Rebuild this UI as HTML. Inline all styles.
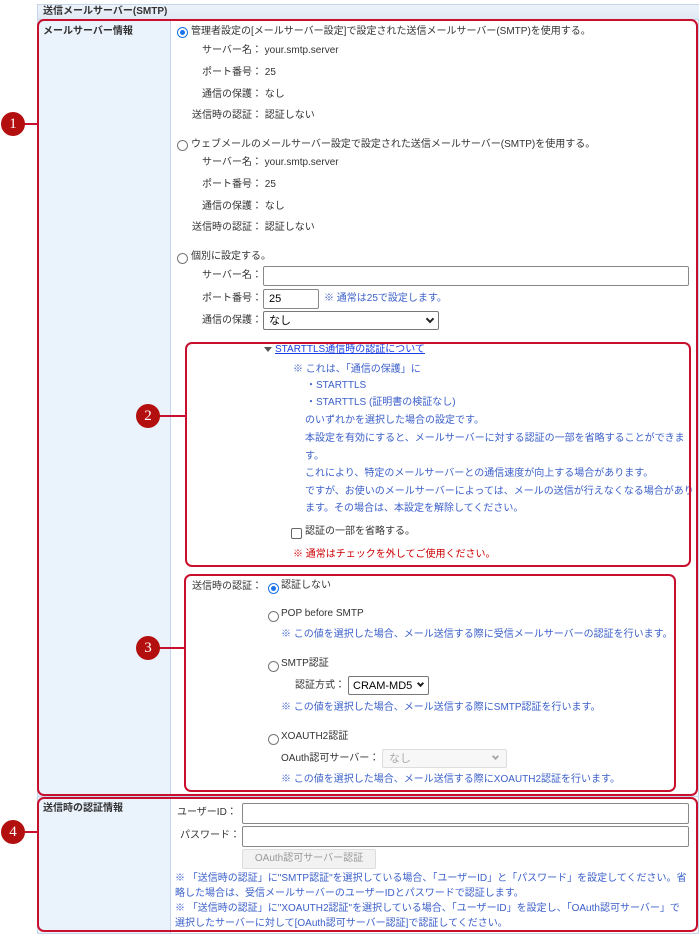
<!DOCTYPE html>
<html><head><meta charset="utf-8"><style>
*{box-sizing:border-box;margin:0;padding:0}
body{width:700px;height:937px;background:#fff;position:relative;overflow:hidden;font-family:"Liberation Sans","Noto Sans CJK JP",sans-serif;font-size:10px;color:#333}
.a{position:absolute;white-space:nowrap;line-height:14px}
.b{color:#3b5fc9}
.r{color:#c00}
.rad{position:absolute;width:11px;height:11px;border:1px solid #777;border-radius:50%;background:#fff}
.rad.on{border-color:#1a73e8}
.rad.on::after{content:"";position:absolute;left:2px;top:2px;width:5px;height:5px;border-radius:50%;background:#1a73e8}
.box{position:absolute;border:2px solid #c8102e;border-radius:7px}
.inp{position:absolute;border:1px solid #888;background:#fff;border-radius:2px}
.num{position:absolute;width:24px;height:24px;border-radius:50%;background:#b30f0f;color:#fff;font-family:"Liberation Serif",serif;font-size:15px;text-align:center;line-height:24px}
.ln{position:absolute;height:2px;background:#c8102e}
.chev{position:absolute;width:6px;height:6px;border-right:2px solid #222;border-bottom:2px solid #222;transform:rotate(45deg)}
</style></head><body>
<div style="position:absolute;left:37px;top:4px;width:662px;height:930px;border:1px solid #c6d6ea"></div>
<div style="position:absolute;left:38px;top:5px;width:661px;height:15px;background:linear-gradient(#eef3fa,#dfe8f4);border-bottom:1px solid #c6d6ea"></div>
<div class="a" style="left:43px;top:5px;font-weight:bold">送信メールサーバー(SMTP)</div>
<div style="position:absolute;left:38px;top:20px;width:132px;height:913px;background:#eaf2fc"></div>
<div style="position:absolute;left:170px;top:20px;width:1px;height:913px;background:#c6d6ea"></div>
<div style="position:absolute;left:38px;top:796px;width:661px;height:1px;background:#c6d6ea"></div>
<div class="a" style="left:43px;top:25px;font-weight:bold">メールサーバー情報</div>
<div class="a" style="left:43px;top:802px;font-weight:bold">送信時の認証情報</div>

<div class="rad on" style="left:177px;top:27px"></div>
<div class="a" style="left:191px;top:25px">管理者設定の[メールサーバー設定]で設定された送信メールサーバー(SMTP)を使用する。</div>
<div class="a" style="left:202px;top:44px">サーバー名： your.smtp.server</div>
<div class="a" style="left:202px;top:66px">ポート番号： 25</div>
<div class="a" style="left:202px;top:88px">通信の保護： なし</div>
<div class="a" style="left:192px;top:109px">送信時の認証： 認証しない</div>

<div class="rad" style="left:177px;top:140px"></div>
<div class="a" style="left:191px;top:138px">ウェブメールのメールサーバー設定で設定された送信メールサーバー(SMTP)を使用する。</div>
<div class="a" style="left:202px;top:156px">サーバー名： your.smtp.server</div>
<div class="a" style="left:202px;top:178px">ポート番号： 25</div>
<div class="a" style="left:202px;top:200px">通信の保護： なし</div>
<div class="a" style="left:192px;top:221px">送信時の認証： 認証しない</div>

<div class="rad" style="left:177px;top:253px"></div>
<div class="a" style="left:191px;top:250px">個別に設定する。</div>
<div class="a" style="left:202px;top:269px">サーバー名：</div>
<div class="inp" style="left:263px;top:266px;width:426px;height:20px"></div>
<div class="a" style="left:202px;top:292px">ポート番号：</div>
<div class="inp" style="left:263px;top:289px;width:56px;height:20px"></div>
<div class="a" style="left:269px;top:292px;color:#000;font-size:11px">25</div>
<div class="a b" style="left:324px;top:292px">※ 通常は25で設定します。</div>
<div class="a" style="left:202px;top:314px">通信の保護：</div>
<div class="inp" style="left:263px;top:311px;width:176px;height:19px;border-color:#777"></div>
<div class="a" style="left:269px;top:314px;color:#000;font-size:11px">なし</div>
<div class="chev" style="left:427px;top:316px"></div>

<div style="position:absolute;left:264px;top:347px;border-left:4px solid transparent;border-right:4px solid transparent;border-top:5px solid #555"></div>
<div class="a" style="left:275px;top:343px;color:#1a3ee0;text-decoration:underline">STARTTLS通信時の認証について</div>
<div class="a b" style="left:293px;top:363px">※ これは、「通信の保護」に</div>
<div class="a b" style="left:306px;top:379px">・STARTTLS</div>
<div class="a b" style="left:306px;top:396px">・STARTTLS (証明書の検証なし)</div>
<div class="a b" style="left:305px;top:414px">のいずれかを選択した場合の設定です。</div>
<div class="a b" style="left:305px;top:432px">本設定を有効にすると、メールサーバーに対する認証の一部を省略することができま</div>
<div class="a b" style="left:305px;top:450px">す。</div>
<div class="a b" style="left:305px;top:467px">これにより、特定のメールサーバーとの通信速度が向上する場合があります。</div>
<div class="a b" style="left:305px;top:485px">ですが、お使いのメールサーバーによっては、メールの送信が行えなくなる場合があり</div>
<div class="a b" style="left:305px;top:502px">ます。その場合は、本設定を解除してください。</div>
<div style="position:absolute;left:291px;top:528px;width:11px;height:11px;border:1px solid #666;border-radius:2px"></div>
<div class="a" style="left:305px;top:525px">認証の一部を省略する。</div>
<div class="a r" style="left:293px;top:548px">※ 通常はチェックを外してご使用ください。</div>

<div class="a" style="left:192px;top:580px">送信時の認証：</div>
<div class="rad on" style="left:268px;top:583px"></div>
<div class="a" style="left:281px;top:579px">認証しない</div>
<div class="rad" style="left:268px;top:611px"></div>
<div class="a" style="left:281px;top:607px">POP before SMTP</div>
<div class="a b" style="left:281px;top:628px">※ この値を選択した場合、メール送信する際に受信メールサーバーの認証を行います。</div>
<div class="rad" style="left:268px;top:661px"></div>
<div class="a" style="left:281px;top:657px">SMTP認証</div>
<div class="a" style="left:295px;top:679px">認証方式：</div>
<div class="inp" style="left:348px;top:676px;width:81px;height:19px;border-color:#777"></div>
<div class="a" style="left:353px;top:679px;color:#000;font-size:11px">CRAM-MD5</div>
<div class="chev" style="left:418px;top:681px;width:5px;height:5px"></div>
<div class="a b" style="left:281px;top:701px">※ この値を選択した場合、メール送信する際にSMTP認証を行います。</div>
<div class="rad" style="left:268px;top:734px"></div>
<div class="a" style="left:281px;top:730px">XOAUTH2認証</div>
<div class="a" style="left:281px;top:752px">OAuth認可サーバー：</div>
<div class="inp" style="left:382px;top:749px;width:125px;height:19px;border-color:#ddd;background:#f7f7f7"></div>
<div class="a" style="left:389px;top:752px;color:#aaa;font-size:11px">なし</div>
<div class="chev" style="left:493px;top:754px;width:5px;height:5px;border-color:#aaa"></div>
<div class="a b" style="left:281px;top:773px">※ この値を選択した場合、メール送信する際にXOAUTH2認証を行います。</div>

<div class="a" style="left:177px;top:806px">ユーザーID：</div>
<div class="inp" style="left:242px;top:803px;width:447px;height:21px"></div>
<div class="a" style="left:180px;top:829px">パスワード：</div>
<div class="inp" style="left:242px;top:826px;width:447px;height:21px"></div>
<div style="position:absolute;left:242px;top:849px;width:134px;height:20px;border:1px solid #ddd;background:#f2f2f2;border-radius:2px;color:#999;line-height:18px;text-align:center">OAuth認可サーバー認証</div>
<div class="a b" style="left:175px;top:872px">※ 「送信時の認証」に"SMTP認証"を選択している場合、「ユーザーID」と「パスワード」を設定してください。省</div>
<div class="a b" style="left:175px;top:887px">略した場合は、受信メールサーバーのユーザーIDとパスワードで認証します。</div>
<div class="a b" style="left:175px;top:902px">※ 「送信時の認証」に"XOAUTH2認証"を選択している場合、「ユーザーID」を設定し、「OAuth認可サーバー」で</div>
<div class="a b" style="left:175px;top:917px">選択したサーバーに対して[OAuth認可サーバー認証]で認証してください。</div>

<div class="box" style="left:37px;top:19px;width:661px;height:777px"></div>
<div class="box" style="left:185px;top:342px;width:506px;height:225px"></div>
<div class="box" style="left:184px;top:574px;width:492px;height:218px"></div>
<div class="box" style="left:37px;top:797px;width:661px;height:135px"></div>

<div class="ln" style="left:20px;top:123px;width:18px"></div>
<div class="num" style="left:1px;top:112px">1</div>
<div class="ln" style="left:155px;top:415px;width:31px"></div>
<div class="num" style="left:136px;top:404px">2</div>
<div class="ln" style="left:155px;top:647px;width:30px"></div>
<div class="num" style="left:136px;top:636px">3</div>
<div class="ln" style="left:20px;top:831px;width:18px"></div>
<div class="num" style="left:1px;top:820px">4</div>
</body></html>
